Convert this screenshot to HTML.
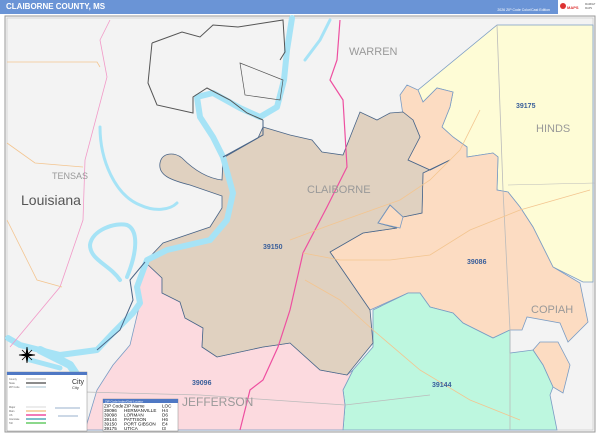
<!DOCTYPE html>
<html><head><meta charset="utf-8"><style>
html,body{margin:0;padding:0;background:#fff;}
body{width:600px;height:436px;overflow:hidden;position:relative;font-family:"Liberation Sans",sans-serif;}
.hdr{position:absolute;left:0;top:0;width:558px;height:14px;background:#6a94d6;}
.hdr b{position:absolute;left:6px;top:2px;color:#fff;font-size:8px;}
.hdr i{position:absolute;right:8px;top:8px;color:#fff;font-size:3.5px;font-style:normal;}
svg{position:absolute;left:0;top:0;}
</style></head><body>
<div class="hdr"><b>CLAIBORNE COUNTY, MS</b><i>2026 ZIP Code Color/Cast Edition</i></div>
<svg width="600" height="436" viewBox="0 0 600 436" font-family="Liberation Sans, sans-serif">
<rect x="558" y="0" width="42" height="14" fill="#fff"/>
<circle cx="563" cy="6" r="3" fill="#d33"/>
<text x="567" y="9" font-size="4" fill="#d33" font-weight="bold">MAPS</text>
<text x="585" y="5" font-size="2.5" fill="#555">MARKET</text>
<text x="585" y="9" font-size="2.5" fill="#555">MAPS</text>
<rect x="5" y="16" width="590" height="416" fill="#f3f3f3" stroke="#999" stroke-width="1"/>
<rect x="7" y="18" width="586" height="412" fill="#f3f3f3" stroke="#bbb" stroke-width="0.5"/>
<path d="M497,25 L593,25 L593,282 L583,282 L553,267 L533,227 L520,207 L508,192 L497,190 L498,157 L493,153 L467,157 L467,147 L453,137 L442,127 L450,107 L453,92 L437,88 L423,102 L418,90 Z" fill="#fefcd6" stroke="#7a9cc4" stroke-width="0.8"/>
<path d="M403,115 L400,95 L407,85 L418,90 L423,102 L437,88 L453,92 L450,107 L442,127 L453,137 L467,147 L467,157 L493,153 L498,157 L497,190 L508,192 L520,207 L533,227 L553,267 L580,283 L588,322 L568,342 L560,323 L527,317 L522,330 L510,330 L493,338 L463,323 L453,313 L430,307 L420,293 L408,293 L370,310 L337,262 L330,252 L363,233 L397,228 L378,223 L390,205 L403,217 L422,213 L423,173 L450,160 L430,170 L408,160 L420,137 L413,120 Z" fill="#fcdcc2" stroke="#7a9cc4" stroke-width="0.8"/>
<path d="M533,350 L540,342 L558,342 L570,365 L563,393 L553,387 L543,365 Z" fill="#fcdcc2" stroke="#7a9cc4" stroke-width="0.8"/>
<path d="M373,310 L408,293 L420,293 L430,307 L453,313 L463,323 L493,338 L510,330 L510,353 L533,350 L543,365 L553,387 L550,395 L557,430 L343,430 L345,405 L343,390 L353,370 L373,347 Z" fill="#bdf7df" stroke="#7a9cc4" stroke-width="0.8"/>
<path d="M145,262 L162,278 L162,293 L180,302 L185,318 L203,328 L202,347 L217,357 L263,347 L277,345 L290,343 L320,370 L347,375 L353,370 L343,390 L345,405 L343,430 L85,430 L97,390 L113,365 L130,345 L140,303 L137,287 Z" fill="#fcdadf" stroke="#7a9cc4" stroke-width="0.8"/>
<path d="M263,127 L290,135 L312,140 L322,152 L343,155 L360,112 L377,120 L390,113 L403,112 L413,120 L420,137 L408,160 L430,170 L450,160 L423,173 L422,213 L403,217 L390,205 L378,223 L397,228 L363,233 L330,252 L337,262 L370,310 L373,343 L347,375 L320,370 L290,343 L277,345 L263,347 L217,357 L202,347 L203,328 L185,318 L180,302 L162,293 L162,278 L145,262 L163,243 L210,227 L222,208 L222,196 L190,185 C170,180 158,175 160,163 C162,152 175,152 182,158 C192,168 205,178 222,180 L223,158 L258,138 Z" fill="#e0d1c0" stroke="#4a6587" stroke-width="0.8"/>
<path d="M378,223 L390,205 L403,217 L400,228 Z" fill="none" stroke="#7a9cc4" stroke-width="0.8"/>
<path d="M497,25 L503,190 L510,330 L510,430" fill="none" stroke="#bbb" stroke-width="0.8"/>
<path d="M508,185 L595,183" fill="none" stroke="#bbb" stroke-width="0.6"/>
<path d="M85,392 L200,395 L345,405 L430,395" fill="none" stroke="#bbb" stroke-width="0.7"/>
<g fill="none" stroke="#a6e3f6" stroke-linecap="round" stroke-linejoin="round">
<path d="M292,18 L287,50 L284,80 L277,107 L260,117 L240,108 L213,93 L197,97 L200,117 L213,137 L223,157 L233,193 L227,220 L210,240 L167,250 L147,260 L137,287 L140,303 L133,313 L113,333 L97,350 L60,355 L20,345 L8,338" stroke-width="6"/>
<path d="M330,20 L320,40 L305,60" stroke-width="3"/>
<path d="M100,127 C100,160 115,195 140,205 C155,212 170,210 177,203" stroke-width="3"/>
<path d="M120,280 C110,265 90,260 90,245 C92,230 115,222 127,225 C138,230 138,250 127,277" stroke-width="4"/>
<path d="M40,350 L70,365 L80,380" stroke-width="8"/>
<path d="M30,360 L60,368" stroke-width="5"/>
</g>
<g fill="none" stroke="#555" stroke-width="1">
<path d="M152,43 L182,32 L200,37 L213,25 L238,27 L283,20 L285,52 L280,60"/>
<path d="M152,43 L148,83 L157,105 L193,113 L193,97 L207,88 L230,100 L247,113 L263,120"/>
<path d="M240,63 L283,80 L280,100 L245,95 Z" stroke-width="0.7"/>
</g>
<g fill="none" stroke="#4a6587" stroke-width="1">
<path d="M263,120 L263,135 L223,157"/>
<path d="M145,262 L130,280 L133,300 L120,330 L97,350"/>
</g>
<path d="M110,20 L100,40 L107,77 L85,160 L83,220 L60,287 L10,347" fill="none" stroke="#f29ac8" stroke-width="0.8"/>
<path d="M340,20 L337,60 L330,80 L343,100 L347,167 L327,207 L303,253 L290,310 L278,347 L263,380 L250,390 L240,430" fill="none" stroke="#ee4fa0" stroke-width="1.2"/>
<g fill="none" stroke="#f3c590" stroke-width="0.8">
<path d="M7,62 L97,62 L100,67"/>
<path d="M7,143 L35,163 L83,167"/>
<path d="M7,220 L27,260 L37,280 L62,287"/>
<path d="M303,253 L340,260 L390,260 L430,255 L470,230 L520,210 L590,190"/>
<path d="M290,240 L330,225 L400,200 L430,180 L460,150 L480,110"/>
<path d="M305,280 L340,300 L373,330 L420,370 L470,400 L520,420"/>
</g>
<g fill="#999" font-size="11">
<text x="349" y="55">WARREN</text>
<text x="536" y="132">HINDS</text>
<text x="307" y="193">CLAIBORNE</text>
<text x="531" y="313">COPIAH</text>
<text x="182" y="406" font-size="12">JEFFERSON</text>
<text x="52" y="179" font-size="9">TENSAS</text>
</g>
<text x="21" y="205" font-size="14" fill="#555">Louisiana</text>
<g fill="#3a5f9a" font-size="7" font-weight="bold">
<text x="516" y="108">39175</text>
<text x="263" y="249">39150</text>
<text x="467" y="264">39086</text>
<text x="432" y="387">39144</text>
<text x="192" y="385">39096</text>
</g>
<g stroke="#000" stroke-width="0.8" fill="#000">
<path d="M27,347 L28,354 L35,355 L28,356 L27,363 L26,356 L19,355 L26,354 Z"/>
<path d="M22,350 L32,360 M32,350 L22,360"/>
</g>
<rect x="7" y="372" width="80" height="59" fill="#fff" stroke="#888" stroke-width="0.5"/>
<rect x="7" y="372" width="80" height="3" fill="#4f78c4"/>
<g stroke="#999" stroke-width="0.8">
<line x1="26" y1="379" x2="46" y2="379"/>
<line x1="26" y1="383" x2="46" y2="383" stroke-width="1.5" stroke="#666"/>
<line x1="26" y1="387" x2="46" y2="387" stroke="#8ab"/>
<line x1="26" y1="407" x2="46" y2="407" stroke="#ccc"/>
<line x1="26" y1="411" x2="46" y2="411" stroke="#f3c590" stroke-width="1.5"/>
<line x1="26" y1="415" x2="46" y2="415" stroke="#ee4fa0" stroke-width="1.5"/>
<line x1="26" y1="419" x2="46" y2="419" stroke="#5ab" stroke-width="1.5"/>
<line x1="26" y1="423" x2="46" y2="423" stroke="#6c6" stroke-width="1.5"/>
<line x1="55" y1="408" x2="80" y2="408" stroke="#79b"/>
<line x1="58" y1="416" x2="78" y2="416" stroke="#79b"/>
</g>
<g font-size="2.5" fill="#666"><text x="9" y="380">County</text><text x="9" y="384">State</text><text x="9" y="388">ZIP Code</text><text x="9" y="408">Major</text><text x="9" y="412">Main</text><text x="9" y="416">US</text><text x="9" y="420">Interstate</text><text x="9" y="424">Toll</text></g>
<text x="72" y="384" font-size="7" fill="#333">City</text>
<text x="72" y="389" font-size="4" fill="#333">City</text>
<rect x="103" y="399" width="75" height="32" fill="#fff" stroke="#888" stroke-width="0.5"/>
<rect x="103" y="399" width="75" height="4" fill="#4f78c4"/>
<text x="105" y="402.5" font-size="3" fill="#fff">ZIP Code Index/Grid Locator</text>
<g font-size="4.6" fill="#111">
<text x="104" y="407.5">ZIP Code</text><text x="124" y="407.5">ZIP Name</text><text x="162" y="407.5">LOC</text>
<text x="104" y="412">39096</text><text x="124" y="412">HERMANVILLE</text><text x="162" y="412">H4</text>
<text x="104" y="416.5">39098</text><text x="124" y="416.5">LORMAN</text><text x="162" y="416.5">D6</text>
<text x="104" y="421">39144</text><text x="124" y="421">PATTISON</text><text x="162" y="421">H6</text>
<text x="104" y="425.5">39150</text><text x="124" y="425.5">PORT GIBSON</text><text x="162" y="425.5">E4</text>
<text x="104" y="430">39175</text><text x="124" y="430">UTICA</text><text x="162" y="430">I3</text>
</g>
</svg>
</body></html>
